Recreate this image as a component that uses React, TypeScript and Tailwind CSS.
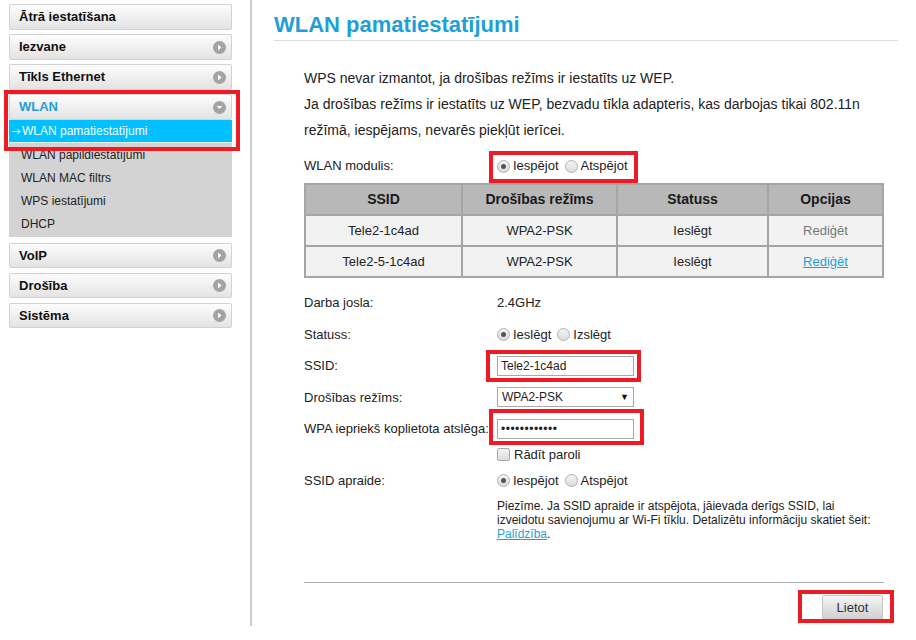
import type { ReactNode } from 'react';

const FONT = "font-['Liberation_Sans',Arial,sans-serif]";

function NavIcon({ open = false }: { open?: boolean }) {
  return (
    <span className="w-[13px] h-[13px] rounded-full bg-[#a3a3a3] flex items-center justify-center shrink-0">
      {open ? (
        <svg width="7" height="5" viewBox="0 0 7 5">
          <path d="M0.5 1 L6.5 1 L3.5 4 Z" fill="#fff" />
        </svg>
      ) : (
        <svg width="5" height="7" viewBox="0 0 5 7">
          <path d="M1 0.5 L4.5 3.5 L1 6.5 Z" fill="#fff" />
        </svg>
      )}
    </span>
  );
}

function NavItem({
  label,
  icon = true,
  open = false,
  active = false,
  className = '',
}: {
  label: string;
  icon?: boolean;
  open?: boolean;
  active?: boolean;
  className?: string;
}) {
  return (
    <div
      className={`flex items-center justify-between rounded-[2px] border border-[#d2d2d2] bg-gradient-to-b from-[#fdfdfd] to-[#e3e3e3] pl-[9px] pr-[5px] text-[13px] font-bold ${
        active ? 'text-[#1e9fd8]' : 'text-[#111]'
      } ${className}`}
    >
      <span>{label}</span>
      {icon && <NavIcon open={open} />}
    </div>
  );
}

function Radio({ checked, label }: { checked?: boolean; label: string }) {
  return (
    <span className="inline-flex items-center gap-[3px]">
      <span className="w-[13px] h-[13px] rounded-full border border-[#b0b0b0] bg-gradient-to-b from-[#f4f4f4] to-[#dcdcdc] flex items-center justify-center">
        {checked && <span className="w-[5px] h-[5px] rounded-full bg-[#555]" />}
      </span>
      <span>{label}</span>
    </span>
  );
}

function Row({ label, children, h = 'h-[31.5px]' }: { label?: string; children?: ReactNode; h?: string }) {
  return (
    <div className={`flex items-center ${h}`}>
      <div className="w-[193px] shrink-0">{label}</div>
      <div className="flex-1 flex items-center">{children}</div>
    </div>
  );
}

function RedBox({ className }: { className: string }) {
  return <div className={`absolute border-[4px] border-[#ed1c24] pointer-events-none ${className}`} />;
}

export default function App() {
  const subItems = ['WLAN papildiestatījumi', 'WLAN MAC filtrs', 'WPS iestatījumi', 'DHCP'];
  const rows = [
    { ssid: 'Tele2-1c4ad', mode: 'WPA2-PSK', status: 'Ieslēgt', link: false },
    { ssid: 'Tele2-5-1c4ad', mode: 'WPA2-PSK', status: 'Ieslēgt', link: true },
  ];

  return (
    <div className={`relative flex w-[916px] h-[640px] bg-white text-[#222] ${FONT}`}>
      {/* sidebar */}
      <aside className="w-[252px] h-[626px] shrink-0 border-r-[2px] border-[#cccccc] pl-[9px] pr-[18px] pt-[4px]">
        <div className="flex flex-col">
          <NavItem label="Ātrā iestatīšana" icon={false} className="h-[26px] mb-[4px]" />
          <NavItem label="Iezvane" className="h-[26px] mb-[4px]" />
          <NavItem label="Tīkls Ethernet" className="h-[26px] mb-[4px]" />
          <NavItem label="WLAN" open active className="h-[26px]" />
          <div className="bg-[#d3d3d3] h-[117px] mb-[6px] text-[12px]">
            <div className="h-[23px] bg-[#00c0ff] text-white flex items-center pl-[3px] border-b border-[#e8f8ff]">
              <svg width="9" height="7" viewBox="0 0 9 7" className="mr-[1px]">
                <path d="M0.5 3.5 H8 M5.5 1 L8 3.5 L5.5 6" stroke="#fff" strokeWidth="1" fill="none" />
              </svg>
              <span>WLAN pamatiestatījumi</span>
            </div>
            {subItems.map((s) => (
              <div key={s} className="h-[23px] flex items-center pl-[12px] text-[#222]">
                {s}
              </div>
            ))}
          </div>
          <NavItem label="VoIP" className="h-[25px] mb-[5px]" />
          <NavItem label="Drošība" className="h-[25px] mb-[5px]" />
          <NavItem label="Sistēma" className="h-[25px]" />
        </div>
      </aside>

      {/* content */}
      <main className="flex-1 pl-[22px] pr-[18px] pt-[10px]">
        <h1 className="text-[22px] leading-[30px] font-bold text-[#1e9fd8] border-b border-[#dddddd]">
          WLAN pamatiestatījumi
        </h1>

        <div className="pl-[30px] pr-[14px] text-[13px]">
          <p className="mt-[24px] text-[14px] leading-[26px] text-[#222]">
            WPS nevar izmantot, ja drošības režīms ir iestatīts uz WEP.
            <br />
            Ja drošības režīms ir iestatīts uz WEP, bezvadu tīkla adapteris, kas darbojas tikai 802.11n
            <br />
            režīmā, iespējams, nevarēs piekļūt ierīcei.
          </p>

          <div className="mt-[8px]">
            <Row label="WLAN modulis:" h="h-[30px]">
              <Radio checked label="Iespējot" />
              <span className="w-[6px]" />
              <Radio label="Atspējot" />
            </Row>
          </div>

          <table className="mt-[2px] w-[580px] border-collapse text-center">
            <thead>
              <tr className="h-[31px] bg-[#b8b8b8] text-[14px] font-bold text-[#1a1a1a]">
                <th className="w-[157px] border-2 border-[#a5a5a5]">SSID</th>
                <th className="w-[155px] border-2 border-[#a5a5a5]">Drošības režīms</th>
                <th className="w-[151px] border-2 border-[#a5a5a5]">Statuss</th>
                <th className="border-2 border-[#a5a5a5]">Opcijas</th>
              </tr>
            </thead>
            <tbody>
              {rows.map((r) => (
                <tr key={r.ssid} className="h-[31px] bg-[#f2f2f2] text-[13px]">
                  <td className="border-2 border-[#a5a5a5]">{r.ssid}</td>
                  <td className="border-2 border-[#a5a5a5]">{r.mode}</td>
                  <td className="border-2 border-[#a5a5a5]">{r.status}</td>
                  <td className="border-2 border-[#a5a5a5]">
                    {r.link ? (
                      <span className="text-[#1e9fd8] underline">Rediģēt</span>
                    ) : (
                      <span className="text-[#777]">Rediģēt</span>
                    )}
                  </td>
                </tr>
              ))}
            </tbody>
          </table>

          <div className="mt-[9px]">
            <Row label="Darba josla:">2.4GHz</Row>
            <Row label="Statuss:">
              <Radio checked label="Ieslēgt" />
              <span className="w-[6px]" />
              <Radio label="Izslēgt" />
            </Row>
            <Row label="SSID:">
              <div className="w-[137px] h-[20px] border border-[#a9a9a9] bg-white flex items-center px-[3px] text-[12px]">
                Tele2-1c4ad
              </div>
            </Row>
            <Row label="Drošības režīms:">
              <div className="w-[137px] h-[20px] border border-[#a9a9a9] bg-white flex items-center justify-between px-[4px] text-[12px]">
                <span>WPA2-PSK</span>
                <span className="text-[9px] text-[#111]">▼</span>
              </div>
            </Row>
            <Row label="WPA iepriekš koplietota atslēga:">
              <div className="w-[137px] h-[20px] border border-[#a9a9a9] bg-white flex items-center px-[3px] text-[12px] tracking-[0.5px]">
                ••••••••••••
              </div>
            </Row>
            <Row h="h-[20px]">
              <span className="inline-flex items-center gap-[4px]">
                <span className="w-[13px] h-[13px] rounded-[2px] border border-[#aaa] bg-gradient-to-b from-[#f4f4f4] to-[#dcdcdc]" />
                <span>Rādīt paroli</span>
              </span>
            </Row>
            <Row label="SSID apraide:">
              <Radio checked label="Iespējot" />
              <span className="w-[6px]" />
              <Radio label="Atspējot" />
            </Row>
            <div className="flex mt-[3px]">
              <div className="w-[193px] shrink-0" />
              <p className="text-[12px] leading-[14px] text-[#222]">
                Piezīme. Ja SSID apraide ir atspējota, jāievada derīgs SSID, lai
                <br />
                izveidotu savienojumu ar Wi-Fi tīklu. Detalizētu informāciju skatiet šeit:
                <br />
                <span className="text-[#1e9fd8] underline">Palīdzība</span>.
              </p>
            </div>
          </div>

          <div className="mt-[41px] border-t border-[#aaaaaa]" />
          <div className="flex justify-end mt-[12px] pr-[1px]">
            <button className="w-[61px] h-[25px] border border-[#c4c4c4] rounded-[2px] bg-gradient-to-b from-[#f6f6f6] to-[#cfcfcf] text-[13px] text-[#333]">
              Lietot
            </button>
          </div>
        </div>
      </main>

      {/* annotation boxes */}
      <RedBox className="left-[4px] top-[90px] w-[236px] h-[61px]" />
      <RedBox className="left-[489px] top-[151px] w-[149px] h-[32px]" />
      <RedBox className="left-[486px] top-[350px] w-[155px] h-[32px]" />
      <RedBox className="left-[489px] top-[409px] w-[155px] h-[36px]" />
      <RedBox className="left-[798px] top-[590px] w-[96px] h-[33px]" />
    </div>
  );
}
